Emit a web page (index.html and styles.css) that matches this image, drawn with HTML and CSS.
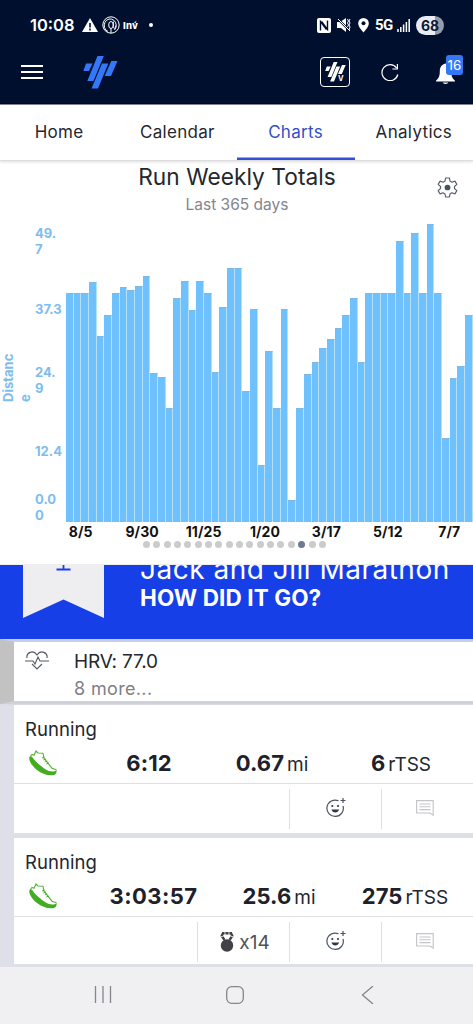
FILE: index.html
```
<!DOCTYPE html>
<html lang="en">
<head>
<meta charset="utf-8">
<meta name="viewport" content="width=device-width">
<title>Charts</title>
<link rel="stylesheet" href="styles.css">
</head>
<body>
<svg class="defs" width="0" height="0">
  <symbol id="logo" viewBox="0 0 35 33"><path d="M3 7.500h6.500L6 15H.300zM14.500 0h6.300L10.500 25H4.300zM19 7.500h6.300L15 32.500H8.500zM28.300 5h6.200L28 20h-6.300z"/></symbol>
  <symbol id="shoe" viewBox="0 0 28 26"><path d="M1 7 3 4.500l2 .8L7 1l2 2 5 .2 1 5 8 10 4.500 1.500" fill="none" stroke="#56b33a" stroke-width="1.100"/><path d="M.5 7C-.5 10 2 15 8 20c5 4 11 6 17 5 2-.5 3-3 2.500-5-3 3-8 1.500-13-2C9 14 4 9 3 6.500z" fill="#43ac20"/><path d="m13 8 2.500-1m-1.200 3 2.500-1m-1 3 2.500-1m-1 3 2.500-1" stroke="#43ac20" stroke-width=".9"/></symbol>
  <symbol id="smile" viewBox="0 0 20 20"><path d="M12.500 2.800A8.200 8.200 0 1 0 17 8" fill="none" stroke="#4a5362" stroke-width="1.200"/><path d="M17 0v5M14.500 2.500h5" stroke="#4a5362" stroke-width="1.200"/><circle cx="6.300" cy="8" r="1.100" fill="#303844"/><circle cx="12" cy="8" r="1.100" fill="#303844"/><path d="M5.500 11.500h7.500c-.8 4-6.700 4-7.500 0z" fill="#303844"/></symbol>
  <symbol id="note" viewBox="0 0 18 16"><path d="M.6.6h16.600v14.600L14.200 13H.6zM3.500 4h11M3.500 6.800h11M3.500 9.600h11" fill="none" stroke="#c3c3c8" stroke-width="1.100"/></symbol>
</svg>
<header class="top">
  <div class="status">
    <div class="status-left">
      <span class="clock">10:08</span>
      <svg class="warn" viewBox="0 0 16 14"><path d="M8 0 16 14H0z" fill="#fff"/><path d="M8 5v4.500M8 10.500v2" stroke="#000f2e" stroke-width="1.600"/></svg>
      <svg class="at" viewBox="0 0 18 18" fill="none" stroke="#fff"><circle cx="9" cy="9" r="8.200"/><path d="M6 15.500A6 6.500 0 1 1 12.500 14"/><ellipse cx="9" cy="9" rx="2.300" ry="3.500"/><path d="M11.300 5.500v5c0 3 2.500 2 2.500-1M9 12.500V17"/></svg>
      <span class="inv">Inv́</span><i class="speck"></i>
    </div>
    <div class="status-right">
      <svg class="nfc" viewBox="0 0 14 15"><rect width="14" height="15" rx="2" fill="#fff"/><path d="M3.500 12.500V3.500l6 8M10.500 2.500v9l-6-8" fill="none" stroke="#000f2e" stroke-width="1.400"/></svg>
      <svg class="mute" viewBox="0 0 14 14"><path d="M0 4h3l6-4v14l-5-4H0z" fill="#fff"/><path d="m0 0 13 13" stroke="#000f2e" stroke-width="2"/><path d="m1 1 12 12" stroke="#fff"/><path d="m10.500 1 1 2-1 2 1 2-1 2M13 1l-1 2 1 2-1 2 1 2-1 3" fill="none" stroke="#fff"/></svg>
      <svg class="pin" viewBox="0 0 11 15"><path d="M5.500 0A5.300 5.300 0 0 0 .2 5.500C.2 9 5.500 14.500 5.500 14.500S10.800 9 10.800 5.500A5.300 5.300 0 0 0 5.500 0z" fill="#fff"/><circle cx="5.500" cy="5.300" r="2" fill="#000f2e"/></svg>
      <span class="net">5G</span>
      <svg class="signal" viewBox="0 0 13 13"><path d="M1 13v-3M3.800 13V8M6.600 13V5.500M9.400 13V3M12.200 13V0" stroke="#fff" stroke-width="1.500"/></svg>
      <span class="battery">68</span>
    </div>
  </div>
  <div class="appbar">
    <div class="burger"><i></i><i></i><i></i></div>
    <svg class="logo"><use href="#logo"/></svg>
    <div class="virtual"><svg><use href="#logo"/></svg><b>V</b></div>
    <svg class="refresh" viewBox="0 0 18 18" fill="none" stroke="#fff" stroke-width="1.200"><path d="M15.500 5A8 8 0 1 0 16.800 11.500M16.400 1v5h-5"/></svg>
    <div class="alerts"><svg viewBox="0 0 20 22" fill="#fff"><path d="M10 0C5.500 1 4 4.500 4 8.500 4 14 2 16 0 18v1h20v-1c-2-2-4-4-4-9.500C16 4.500 14.500 1 10 0zM7 20h6c-.5 2-5.500 2-6 0z"/></svg><span>16</span></div>
  </div>
</header>
<nav class="tabs"><span>Home</span><span>Calendar</span><span class="active">Charts</span><span>Analytics</span></nav>
<section class="chart">
  <div class="chart-head">
    <div class="titles"><h1>Run Weekly Totals</h1><p>Last 365 days</p></div>
    <svg class="gear" viewBox="0 0 22 22"><path d="M9 1h4l.6 3.300 2 1.200 3.200-1.200 2 3.400L18.300 10v2l2.500 2.300-2 3.400-3.200-1.200-2 1.200L13 21H9l-.6-3.300-2-1.200-3.200 1.200-2-3.400L3.700 12v-2L1.200 7.700l2-3.400 3.200 1.200 2-1.200z" fill="none" stroke="#566074" stroke-width="1.200" stroke-linejoin="round"/><circle cx="11" cy="11" r="3" fill="#465063"/></svg>
  </div>
  <div class="plot">
    <div class="axis-title"><span>Distanc<br>e</span></div>
    <div class="y-axis"><span>49.<br>7</span><span>37.3</span><span>24.<br>9</span><span>12.4</span><span>0.0<br>0</span></div>
    <div class="bars">
      <i style="height:229px"></i><i style="height:229px"></i><i style="height:229px"></i><i style="height:240px"></i><i style="height:186.300px"></i><i style="height:207.300px"></i><i style="height:229px"></i><i style="height:234.700px"></i><i style="height:231.700px"></i><i style="height:235.700px"></i><i style="height:246.300px"></i><i style="height:149px"></i><i style="height:144.700px"></i><i style="height:114px"></i><i style="height:223.700px"></i><i style="height:240.700px"></i><i style="height:211.700px"></i><i style="height:240.700px"></i><i style="height:229px"></i><i style="height:150px"></i><i style="height:215px"></i><i style="height:254px"></i><i style="height:254.300px"></i><i style="height:131px"></i><i style="height:213px"></i><i style="height:57px"></i><i style="height:171.300px"></i><i style="height:114px"></i><i style="height:213px"></i><i style="height:22.300px"></i><i style="height:114px"></i><i style="height:148.300px"></i><i style="height:159.700px"></i><i style="height:174.300px"></i><i style="height:183px"></i><i style="height:194.300px"></i><i style="height:207.300px"></i><i style="height:223.700px"></i><i style="height:159.700px"></i><i style="height:229px"></i><i style="height:229px"></i><i style="height:229px"></i><i style="height:229px"></i><i style="height:281px"></i><i style="height:229px"></i><i style="height:289px"></i><i style="height:229px"></i><i style="height:297.700px"></i><i style="height:229px"></i><i style="height:83.700px"></i><i style="height:143.700px"></i><i style="height:156px"></i><i style="height:207.300px"></i>
    </div>
  </div>
  <div class="x-axis"><span>8/5</span><span>9/30</span><span>11/25</span><span>1/20</span><span>3/17</span><span>5/12</span><span>7/7</span></div>
  <div class="dots"><i></i><i></i><i></i><i></i><i></i><i></i><i></i><i></i><i></i><i></i><i></i><i></i><i></i><i></i><i></i><i class="on"></i><i></i><i></i></div>
</section>
<section class="event">
  <svg class="ribbon" viewBox="0 0 81 53"><path d="M0 0h81v53L40.500 34.500 0 53z" fill="#eeeef0"/><path d="M33.500 4.500h14M40.500 0v4" stroke="#173fe8" stroke-width="1.800"/></svg>
  <div class="event-text"><div class="event-name">Jack and Jill Marathon</div><div class="event-ask">HOW DID IT GO?</div></div>
</section>
<section class="metrics">
  <svg class="heart" viewBox="0 0 24 19" fill="none" stroke="#555b61" stroke-width="1.100"><path d="M2 7C1 2 8-2 12 4c4-6 11-2 10 3M0 10h8l2 3 3-7 2 4h9M7 13l5 5 5-5"/></svg>
  <div><div class="hrv">HRV: 77.0</div><div class="more">8 more...</div></div>
</section>
<section class="workout">
  <div class="sport">Running</div>
  <div class="stats"><svg class="shoe"><use href="#shoe"/></svg><span class="time"><b>6:12</b></span><span class="dist"><b>0.67</b><small>mi</small></span><span class="load"><b>6</b><small>rTSS</small></span></div>
  <div class="actions"><div class="blank wide"></div><div class="act"><svg class="smile"><use href="#smile"/></svg></div><div class="act"><svg class="note"><use href="#note"/></svg></div></div>
</section>
<section class="workout second">
  <div class="sport">Running</div>
  <div class="stats"><svg class="shoe"><use href="#shoe"/></svg><span class="time"><b>3:03:57</b></span><span class="dist"><b>25.6</b><small>mi</small></span><span class="load"><b>275</b><small>rTSS</small></span></div>
  <div class="actions"><div class="blank"></div><div class="act sets"><svg class="kettle" viewBox="0 0 14 20"><circle cx="7" cy="13.500" r="6.200" fill="#414247"/><path d="m4.500 8-2.800-4L3 1.300h8L12.300 4 9.500 8" fill="none" stroke="#414247" stroke-width="2.400"/><path d="m.5 5 3-1M5 0v3M9 0v3M13.500 5l-3-1" stroke="#fff" stroke-width=".8"/></svg><span>x14</span></div><div class="act"><svg class="smile"><use href="#smile"/></svg></div><div class="act"><svg class="note"><use href="#note"/></svg></div></div>
</section>
<footer class="sysnav">
  <svg viewBox="0 0 18 18"><path d="M1.500 0v17M9 0v17M16.500 0v17"/></svg>
  <svg viewBox="0 0 18 18"><rect x=".7" y=".7" width="16.600" height="16.600" rx="5"/></svg>
  <svg viewBox="0 0 18 18"><path d="M14 0 3.500 9 14 18"/></svg>
</footer>
</body>
</html>
```
FILE: styles.css
```
* { box-sizing: border-box; }
body { margin: 0; width: 473px; height: 1024px; overflow: hidden; background: #fff; font-family: Inter, "Liberation Sans", sans-serif; color: #24272e; white-space: nowrap; }
svg { display: block; flex: none; }
.defs { position: absolute; }

.top { height: 104px; background: #000f2e; color: #fff; border-bottom: 1px solid #000616; }
.status { height: 50px; display: flex; justify-content: space-between; padding: 0 29px 0 30px; }
.status-left, .status-right { display: flex; align-items: center; }
.clock { font-size: 16.500px; font-weight: 600; width: 52px; }
.warn { width: 16px; height: 14px; }
.at { width: 18px; height: 18px; margin-left: 4px; }
.inv { font-size: 9.500px; font-weight: 800; margin-left: 3px; width: 26px; letter-spacing: .2px; }
.speck { width: 4px; height: 4px; border-radius: 50%; background: #fff; }
.nfc { width: 14px; height: 15px; }
.mute { width: 14px; height: 14px; margin-left: 6px; }
.pin { width: 11px; height: 15px; margin-left: 7px; }
.net { font: 700 15px Roboto, sans-serif; margin-left: 6px; width: 22px; letter-spacing: -.5px; }
.signal { width: 13px; height: 13px; }
.battery { width: 28px; height: 19px; margin-left: 6px; border-radius: 10px; background: linear-gradient(90deg, #e9ecf5 68%, #959dab 68%); color: #0d1836; font-size: 14px; font-weight: 700; line-height: 19px; text-align: center; }
.appbar { height: 44px; display: flex; align-items: center; padding-left: 21px; }
.burger { width: 22px; display: grid; gap: 4px; }
.burger i { height: 2px; background: #fff; }
.logo { width: 35px; height: 33px; margin-left: 40px; fill: #3478f7; }
.virtual { width: 30px; height: 30px; margin-left: 202px; border: 1px solid #fff; border-radius: 4px; display: flex; align-items: center; padding-left: 4px; }
.virtual svg { width: 21px; height: 20px; fill: #fff; }
.virtual b { font-size: 7.500px; margin: 13px 0 0 -8px; }
.refresh { width: 18px; height: 18px; margin-left: 31px; }
.alerts { position: relative; margin-left: 37px; width: 30px; height: 30px; padding-top: 6px; }
.alerts svg { width: 19px; height: 22px; }
.alerts span { position: absolute; left: 10px; top: -2px; width: 17px; height: 20px; border-radius: 3px; background: #3478f7; font-size: 13.500px; line-height: 20px; text-align: center; }

.tabs { height: 57px; display: grid; grid-template-columns: repeat(4, 118.250px); border-top: 1px solid #7b8395; border-bottom: 1px solid #ddd; box-shadow: 0 1px 3px #0002; }
.tabs span { height: 55px; font-size: 17px; line-height: 55px; text-align: center; letter-spacing: .32px; }
.tabs .active { color: #3150c8; box-shadow: inset 0 -2.500px #3150d6; }

.chart { height: 404px; overflow: hidden; border-bottom: 1px solid #eee; }
.chart-head { height: 59px; display: flex; }
.titles { width: 394px; padding-left: 80px; text-align: center; }
h1 { margin: 1px 0 0; font-size: 22.700px; line-height: 30px; font-weight: 400; letter-spacing: .05px; }
.titles p { margin: 4px 0 0; font-size: 15.500px; line-height: 18px; color: #85858a; }
.gear { width: 21px; height: 21px; margin: 16px 0 0 43px; }
.plot { height: 302px; display: flex; align-items: flex-end; color: #7dbdee; font-weight: 700; }
.axis-title { width: 35px; height: 170px; font-size: 13px; line-height: 17px; }
.axis-title span { display: block; width: 34px; height: 50px; writing-mode: vertical-rl; transform: rotate(180deg); }
.y-axis { width: 31px; height: 302px; padding-top: 5px; font-size: 13px; line-height: 16px; }
.y-axis span { display: block; margin-bottom: 47px; }
.y-axis span:first-child { margin-bottom: 44px; }
.y-axis span:nth-child(4) { margin-bottom: 32px; }
.bars { width: 407px; display: grid; grid-template-columns: repeat(53, 7.680px); align-items: end; }
.bars i { background: #6ec1fc; border-right: 1px solid #b5e1fc; border-top: 1px solid #7eb9e4; }
.x-axis { width: 430px; height: 18px; padding-top: 1px; margin-left: 50px; display: grid; grid-template-columns: repeat(7, 61.430px); color: #111; font-size: 14px; font-weight: 700; line-height: 18px; text-align: center; letter-spacing: .1px; }
.dots { display: flex; gap: 3.350px; padding: 1px 0 0 143px; }
.dots i { width: 7px; height: 7px; border-radius: 50%; background: #cbcbcb; }
.dots .on { background: #6b7995; }

.event { height: 74px; background: #173fe8; color: #fff; display: flex; overflow: hidden; }
.ribbon { width: 81px; height: 53px; margin-left: 23px; }
.event-text { margin-left: 36px; }
.event-name { font-size: 28px; line-height: 30px; margin-top: -11px; letter-spacing: .5px; }
.event-ask { font-size: 22.500px; line-height: 28px; font-weight: 700; letter-spacing: .1px; }

.metrics { height: 65px; border-left: 14px solid #c2c2c2; border-top: 3px solid #c8cfdf; border-bottom: 3px solid #cdd1d9; display: flex; padding-left: 11px; }
.heart { width: 24px; height: 19px; margin: 9px 25px 0 0; }
.hrv { font-size: 19px; line-height: 24px; margin-top: 8px; letter-spacing: -.15px; }
.more { font-size: 18px; line-height: 24px; margin-top: 3px; color: #808086; letter-spacing: .35px; }

.workout { height: 134px; border-left: 14px solid #dde0e9; border-top: 1px solid #d7d9df; border-bottom: 5px solid #dde0e7; }
.workout.second { height: 129px; border-top: 0; border-bottom-width: 3px; }
.sport { height: 39px; padding: 13px 0 0 11px; font-size: 18.500px; line-height: 22px; letter-spacing: .05px; }
.stats { height: 40px; display: flex; align-items: center; padding-left: 15px; border-bottom: 1px solid #dedfe4; }
.shoe { width: 28px; height: 26px; margin-top: -2px; }
.stats span { margin-top: -2px; text-align: center; }
.stats b { font-size: 22px; font-weight: 700; color: #1d212b; letter-spacing: .1px; }
.stats small { font-size: 19px; margin-left: 3px; }
.time { width: 156px; padding-left: 28px; }
.second .time { width: 160px; padding-left: 33px; }
.second .time b { letter-spacing: .45px; }
.dist { width: 104px; margin-left: 7px; }
.second .dist { margin-left: 10px; }
.load { width: 124px; margin-left: 15px; }
.second .load { margin-left: 12px; }
.actions { height: 49px; display: flex; padding: 5px 0 4px; }
.blank { width: 183px; flex: none; }
.blank.wide { width: 275px; }
.act { width: 92px; border-left: 1px solid #dddfe4; display: flex; justify-content: center; align-items: center; }
.smile { width: 20px; height: 20px; margin-top: -2px; }
.note { width: 18px; height: 16px; margin-right: 5px; margin-top: -2px; }
.sets { font-size: 19px; color: #505157; gap: 5px; padding-left: 3px; }
.kettle { width: 14px; height: 20px; }
.sysnav { height: 57px; background: #f0f0f2; display: grid; grid-template-columns: repeat(3, 132.500px); justify-content: start; padding: 0 0 1px 36.500px; justify-items: center; align-items: center; }
.sysnav svg { width: 18px; height: 18px; fill: none; stroke: #85858a; stroke-width: 1.300; }
```
